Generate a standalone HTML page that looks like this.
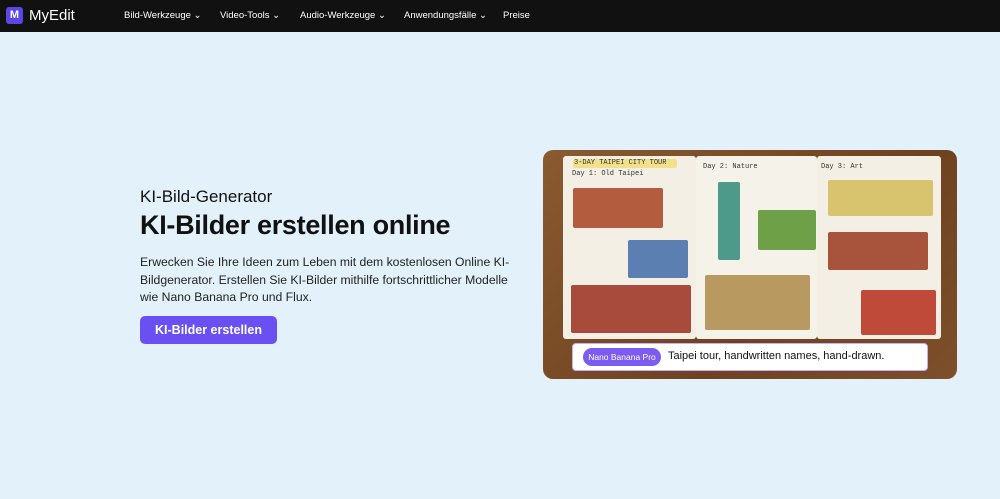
<!DOCTYPE html>
<html><head><meta charset="utf-8"><style>
*{margin:0;padding:0;box-sizing:border-box}
body{width:1000px;height:499px;background:#e3f1fa;font-family:"Liberation Sans",sans-serif;position:relative;overflow:hidden}
.nav{position:absolute;left:0;top:0;width:1000px;height:32px;background:#111}
.logo{position:absolute;left:6px;top:7px;width:17px;height:17px;background:#5c47e6;border-radius:3px;color:#fff;font-size:11px;font-weight:bold;text-align:center;line-height:17px}
.brand{position:absolute;left:29px;top:7px;color:#fff;font-size:15px}
.nl{position:absolute;top:10px;color:#fff;font-size:9.5px}
h3{position:absolute;left:140px;top:187px;font-size:17px;font-weight:normal;color:#111}
h1{position:absolute;left:140px;top:210px;font-size:27px;font-weight:bold;color:#111;letter-spacing:-0.3px}
p{position:absolute;left:140px;top:254px;width:370px;font-size:12.2px;line-height:17.5px;color:#222}
.btn{position:absolute;left:140px;top:316px;width:137px;height:28px;background:#6a4ff2;border-radius:5px;color:#fff;font-size:12.5px;font-weight:bold;text-align:center;line-height:28px}
.img{position:absolute;left:543px;top:150px;width:414px;height:229px;border-radius:10px;background:linear-gradient(135deg,#8a5a30,#6e4220 60%,#7d4f2a);overflow:hidden}
.pg{position:absolute;top:6px;height:183px;background:#f3efe4;border-radius:3px}
.t{position:absolute;font-size:7px;color:#333;font-family:"Liberation Mono",monospace}
.b{position:absolute;border-radius:2px}
.bar{position:absolute;left:29px;top:193px;width:356px;height:28px;background:#fff;border-radius:4px;border:1px solid #c9b0f5}
.tag{position:absolute;left:10px;top:4px;width:78px;height:18px;border-radius:9px;background:#7c5cf0;color:#fff;font-size:8.5px;line-height:18px;text-align:center}
.pt{position:absolute;left:95px;top:6px;font-size:11px;color:#111}
</style></head><body>
<div class="nav">
<div class="logo">M</div><div class="brand">MyEdit</div>
<div class="nl" style="left:124px">Bild-Werkzeuge ⌄</div>
<div class="nl" style="left:220px">Video-Tools ⌄</div>
<div class="nl" style="left:300px">Audio-Werkzeuge ⌄</div>
<div class="nl" style="left:404px">Anwendungsfälle ⌄</div>
<div class="nl" style="left:503px">Preise</div>
</div>
<h3>KI-Bild-Generator</h3>
<h1>KI-Bilder erstellen online</h1>
<p>Erwecken Sie Ihre Ideen zum Leben mit dem kostenlosen Online KI-Bildgenerator. Erstellen Sie KI-Bilder mithilfe fortschrittlicher Modelle wie Nano Banana Pro und Flux.</p>
<div class="btn">KI-Bilder erstellen</div>
<div class="img">
<div class="pg" style="left:20px;width:133px"></div>
<div class="pg" style="left:153px;width:121px;background:#f5f2ea"></div>
<div class="pg" style="left:274px;width:124px"></div>
<div class="b" style="left:30px;top:9px;width:104px;height:9px;background:#f3e08a"></div>
<div class="t" style="left:31px;top:9px">3-DAY TAIPEI CITY TOUR</div>
<div class="t" style="left:29px;top:20px">Day 1: Old Taipei</div>
<div class="t" style="left:160px;top:13px">Day 2: Nature</div>
<div class="t" style="left:278px;top:13px">Day 3: Art</div>
<div class="b" style="left:30px;top:38px;width:90px;height:40px;background:#b45c3e"></div>
<div class="b" style="left:85px;top:90px;width:60px;height:38px;background:#5a7fb0"></div>
<div class="b" style="left:28px;top:135px;width:120px;height:48px;background:#a84a3c"></div>
<div class="b" style="left:175px;top:32px;width:22px;height:78px;background:#4d9a8a"></div>
<div class="b" style="left:215px;top:60px;width:58px;height:40px;background:#6ea048"></div>
<div class="b" style="left:162px;top:125px;width:105px;height:55px;background:#b89a60"></div>
<div class="b" style="left:285px;top:30px;width:105px;height:36px;background:#d8c46e"></div>
<div class="b" style="left:285px;top:82px;width:100px;height:38px;background:#a8533c"></div>
<div class="b" style="left:318px;top:140px;width:75px;height:45px;background:#c04a3a"></div>
<div class="bar"><div class="tag">Nano Banana Pro</div><div class="pt">Taipei tour, handwritten names, hand-drawn.</div></div>
</div>
</body></html>
